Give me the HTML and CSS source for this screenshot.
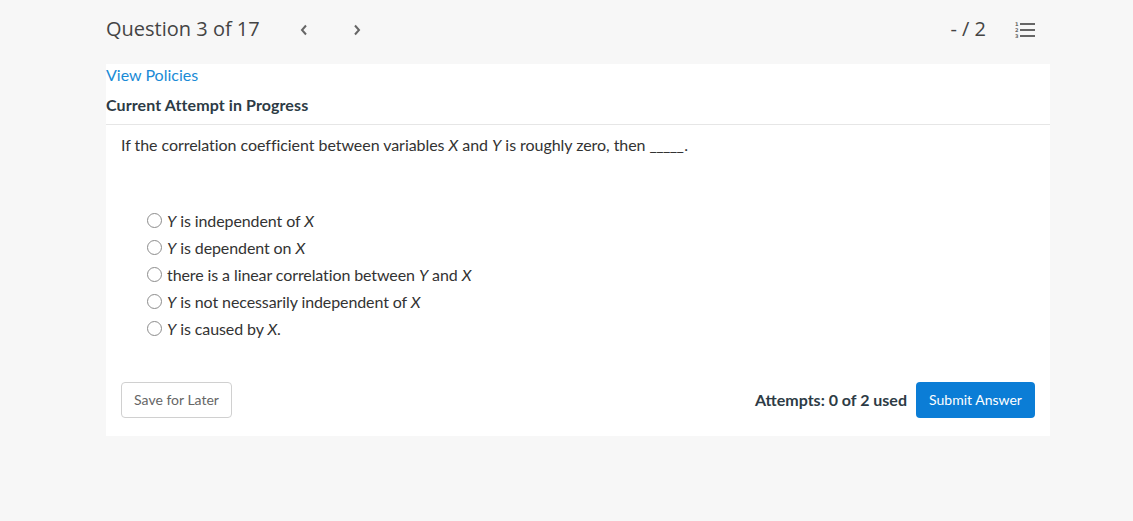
FILE: index.html
```html
<!DOCTYPE html>
<html>
<head>
<meta charset="utf-8">
<link rel="stylesheet" href="styles.css">
</head>
<body>
<div class="page">
  <header class="topbar">
    <div class="title-group">
      <h1 class="q-title">Question 3 of 17</h1>
      <button class="nav-btn" aria-label="Previous">
        <svg width="8" height="12" viewBox="0 0 8 12"><path d="M6 1.5 L2 6 L6 10.5" fill="none" stroke="#666" stroke-width="2"/></svg>
      </button>
      <button class="nav-btn" aria-label="Next">
        <svg width="8" height="12" viewBox="0 0 8 12"><path d="M2 1.5 L6 6 L2 10.5" fill="none" stroke="#666" stroke-width="2"/></svg>
      </button>
    </div>
    <div class="score-group">
      <span class="score">- / 2</span>
      <svg class="list-icon" width="20" height="18" viewBox="0 0 20 18">
        <text x="0" y="5" class="num">1</text>
        <text x="0" y="11" class="num">2</text>
        <text x="0" y="17" class="num">3</text>
        <rect x="5" y="2" width="15" height="2" fill="#666"/>
        <rect x="5" y="8" width="15" height="2" fill="#666"/>
        <rect x="5" y="14" width="15" height="2" fill="#666"/>
      </svg>
    </div>
  </header>
  <main class="card">
    <a class="policies" href="#">View Policies</a>
    <h2 class="attempt-head">Current Attempt in Progress</h2>
    <div class="content">
      <p class="question">If the correlation coefficient between variables <i>X</i> and <i>Y</i> is roughly zero, then <span class="blank">_____</span>.</p>
      <ul class="options">
        <li><span class="radio"></span><span><i>Y</i> is independent of <i>X</i></span></li>
        <li><span class="radio"></span><span><i>Y</i> is dependent on <i>X</i></span></li>
        <li><span class="radio"></span><span>there is a linear correlation between <i>Y</i> and <i>X</i></span></li>
        <li><span class="radio"></span><span><i>Y</i> is not necessarily independent of <i>X</i></span></li>
        <li><span class="radio"></span><span><i>Y</i> is caused by <i>X</i>.</span></li>
      </ul>
      <div class="actions">
        <button class="btn-save">Save for Later</button>
        <div class="submit-group">
          <span class="attempts">Attempts: 0 of 2 used</span>
          <button class="btn-submit">Submit Answer</button>
        </div>
      </div>
    </div>
  </main>
</div>
</body>
</html>
```
FILE: styles.css
```css
* { box-sizing: border-box; }
html, body {
  margin: 0;
  padding: 0;
  background: #f7f7f7;
  font-family: Lato, "Open Sans", sans-serif;
  color: #333;
}
.page {
  width: 944px;
  margin-left: 106px;
}
.topbar {
  height: 64px;
  display: flex;
  align-items: center;
  justify-content: space-between;
  padding-right: 15px;
  padding-bottom: 7px;
}
.title-group {
  display: flex;
  align-items: center;
}
.q-title {
  margin: 0;
  font-family: "Open Sans", sans-serif;
  font-weight: 400;
  font-size: 20px;
  color: #444;
  line-height: 28px;
}
.nav-btn {
  border: 0;
  background: none;
  padding: 0;
  width: 8px;
  height: 12px;
  display: flex;
  position: relative;
  top: 1px;
}
.nav-btn:first-of-type { margin-left: 40px; }
.nav-btn + .nav-btn { margin-left: 45px; }
.score-group {
  display: flex;
  align-items: center;
}
.score {
  font-family: "Open Sans", sans-serif;
  font-size: 20px;
  color: #444;
}
.list-icon {
  margin-left: 29px;
  display: block;
  position: relative;
  top: 1px;
}
.list-icon .num {
  font-family: "DejaVu Sans", sans-serif;
  font-size: 5px;
  font-weight: bold;
  fill: #666;
}
.card {
  background: #fff;
  padding-bottom: 18px;
}
.policies {
  display: block;
  color: #1a8bd6;
  text-decoration: none;
  font-size: 16px;
  line-height: 22px;
}
.attempt-head {
  margin: 8px 0 0;
  font-size: 16px;
  font-weight: 700;
  color: #2d3b45;
  line-height: 22px;
  padding-bottom: 8px;
  border-bottom: 1px solid #e6e6e6;
  letter-spacing: 0.1px;
}
.content {
  padding: 0 15px;
}
.question {
  margin: 9px 0 0;
  font-size: 16px;
  line-height: 22px;
  color: #333;
  letter-spacing: -0.05px;
}
.blank {
  letter-spacing: -0.6px;
  margin-left: 0;
  margin-right: 1px;
}
.options {
  list-style: none;
  margin: 51px 0 0;
  padding: 0 0 0 26px;
}
.options li {
  display: flex;
  align-items: center;
  height: 27px;
  font-size: 16px;
  color: #333;
  letter-spacing: -0.1px;
}
.radio {
  width: 15px;
  height: 15px;
  border: 1px solid #8c8c8c;
  border-radius: 50%;
  margin-right: 5px;
  flex: none;
}
.actions {
  margin-top: 40px;
  display: flex;
  justify-content: space-between;
  align-items: center;
}
.btn-save {
  height: 36px;
  width: 111px;
  background: #fff;
  border: 1px solid #d0d0d0;
  border-radius: 4px;
  font-family: Lato, sans-serif;
  font-size: 14px;
  color: #666;
  padding: 0 0 1px;
}
.submit-group {
  display: flex;
  align-items: center;
}
.attempts {
  font-size: 16px;
  font-weight: 700;
  color: #2d3b45;
  margin-right: 9px;
  position: relative;
  top: -1px;
}
.btn-submit {
  height: 36px;
  width: 119px;
  background: #0b7dd6;
  border: 0;
  border-radius: 4px;
  font-family: Lato, sans-serif;
  font-size: 14px;
  color: #fff;
  padding: 0 0 1px;
}
```
